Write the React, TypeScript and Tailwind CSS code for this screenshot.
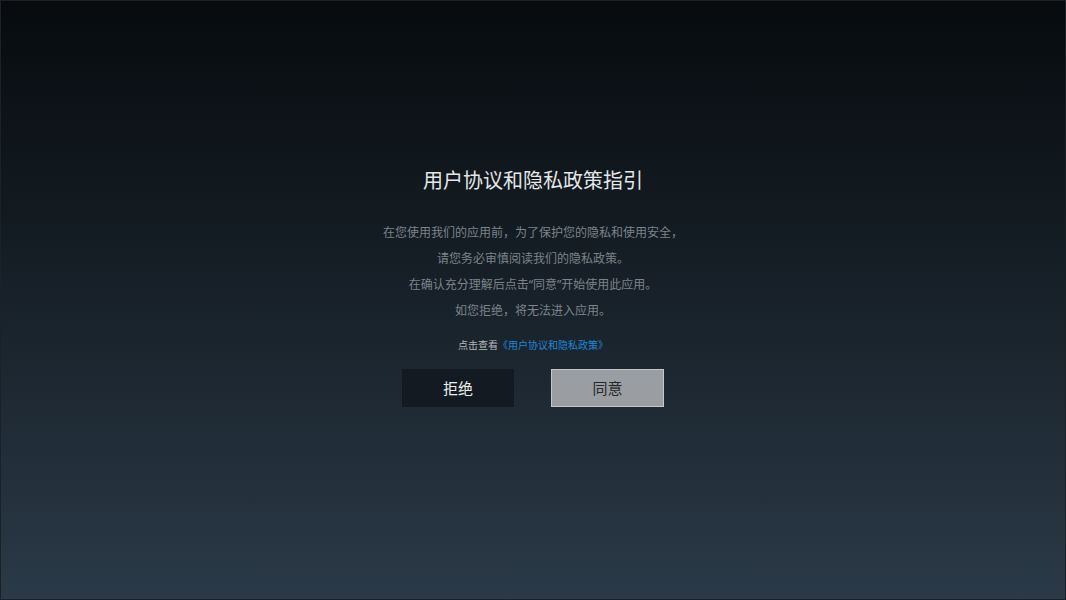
export default function App() {
  return (
    <div
      className="flex h-[600px] w-full flex-col items-center border border-[#1b2126] bg-gradient-to-b from-[#070b0e] to-[#2b3a48] pt-[165px] text-center"
      style={{ fontFamily: '"Noto Sans CJK SC", "Noto Sans", sans-serif' }}
    >
      <h1 className="text-[20px] leading-[28px] font-normal text-[#e4e6e8]">用户协议和隐私政策指引</h1>

      <div className="mt-[25px] text-[12px] leading-[26px] text-[#7c838a]">
        <p className="h-[26px]">在您使用我们的应用前，为了保护您的隐私和使用安全，</p>
        <p className="h-[26px]">请您务必审慎阅读我们的隐私政策。</p>
        <p className="h-[26px] overflow-hidden">
          在确认充分理解后点击<span className="font-['Noto_Sans',sans-serif]">“</span>同意
          <span className="font-['Noto_Sans',sans-serif]">”</span>开始使用此应用。
        </p>
        <p className="h-[26px]">如您拒绝，将无法进入应用。</p>
      </div>

      <p className="mt-[14px] text-[10px] leading-[16px] text-[#b4b7ba]">
        点击查看<span className="text-[#1f86d6]">《用户协议和隐私政策》</span>
      </p>

      <div className="mt-[16px] flex gap-[37px]">
        <button className="h-[38px] w-[112px] bg-[#141a21] text-[15px] text-[#eceeef]">拒绝</button>
        <button className="h-[38px] w-[113px] border border-[#c4c7ca] bg-[#9a9ea3] text-[15px] text-[#25292d]">
          同意
        </button>
      </div>
    </div>
  )
}
